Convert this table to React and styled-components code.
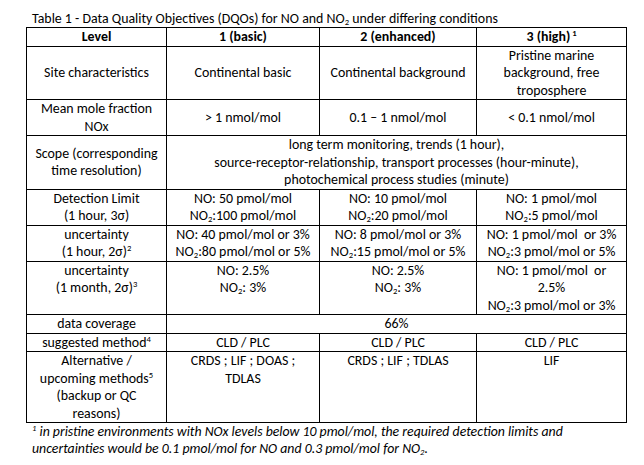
import React from "react";
import styled, { createGlobalStyle } from "styled-components";

const GlobalStyle = createGlobalStyle`
  body {
    margin: 0;
    background: #ffffff;
    font-family: Carlito, Lato, "Liberation Sans", sans-serif;
    color: #000000;
  }
`;

const Page = styled.div`
  width: 644px;
  padding: 10px 0 0 26px;
  box-sizing: border-box;
`;

const Caption = styled.div`
  font-size: 13.9px;
  line-height: 17px;
  margin-left: 6px;
`;

const Table = styled.table`
  width: 600px;
  table-layout: fixed;
  border-collapse: collapse;
  border: 1px solid #000;
  font-size: 13.9px;
  line-height: 17.5px;
`;

const Cell = styled.td`
  border: 1px solid #000;
  padding: 0 3px;
  text-align: center;
  vertical-align: ${(p) => (p.$top ? "top" : "middle")};
  font-weight: ${(p) => (p.$head ? 700 : 400)};
`;

const Sub = styled.sub`
  font-size: 0.62em;
  vertical-align: -0.25em;
  line-height: 0;
`;

const Sup = styled.sup`
  font-size: 0.62em;
  vertical-align: 0.55em;
  line-height: 0;
`;

const Footnote = styled.p`
  margin: 0;
  width: 610px;
  font-size: 13.8px;
  line-height: 17px;
  font-style: italic;
  padding-left: 6px;
`;

const NO2 = () => (
  <>
    NO<Sub>2</Sub>
  </>
);

const rows = [
  {
    label: "Site characteristics",
    cells: ["Continental basic", "Continental background", <>Pristine marine<br />background, free<br />troposphere</>],
  },
  {
    label: <>Mean mole fraction<br />NOx</>,
    cells: ["> 1 nmol/mol", "0.1 – 1 nmol/mol", "< 0.1 nmol/mol"],
  },
  {
    label: <>Scope (corresponding<br />time resolution)</>,
    span: (
      <>
        long term monitoring, trends (1 hour),
        <br />
        source-receptor-relationship, transport processes (hour-minute),
        <br />
        photochemical process studies (minute)
      </>
    ),
  },
  {
    label: <>Detection Limit<br />(1 hour, 3σ)</>,
    cells: [
      <>NO: 50 pmol/mol<br /><NO2 />:100 pmol/mol</>,
      <>NO: 10 pmol/mol<br /><NO2 />:20 pmol/mol</>,
      <>NO: 1 pmol/mol<br /><NO2 />:5 pmol/mol</>,
    ],
  },
  {
    label: <>uncertainty<br />(1 hour, 2σ)<Sup>2</Sup></>,
    cells: [
      <>NO: 40 pmol/mol or 3%<br /><NO2 />:80 pmol/mol or 5%</>,
      <>NO: 8 pmol/mol or 3%<br /><NO2 />:15 pmol/mol or 5%</>,
      <>NO: 1 pmol/mol&nbsp; or 3%<br /><NO2 />:3 pmol/mol or 5%</>,
    ],
  },
  {
    label: <>uncertainty<br />(1 month, 2σ)<Sup>3</Sup></>,
    top: true,
    cells: [
      <>NO: 2.5%<br /><NO2 />: 3%</>,
      <>NO: 2.5%<br /><NO2 />: 3%</>,
      <>NO: 1 pmol/mol&nbsp; or<br />2.5%<br /><NO2 />:3 pmol/mol or 3%</>,
    ],
  },
  { label: "data coverage", span: "66%" },
  {
    label: <>suggested method<Sup>4</Sup></>,
    cells: ["CLD / PLC", "CLD / PLC", "CLD / PLC"],
  },
  {
    label: <>Alternative /<br />upcoming methods<Sup>5</Sup><br />(backup or QC<br />reasons)</>,
    top: true,
    cells: [<>CRDS ; LIF ; DOAS ;<br />TDLAS</>, "CRDS ; LIF ; TDLAS", "LIF"],
  },
];

export default function App() {
  return (
    <Page>
      <GlobalStyle />
      <Caption>
        Table 1 - Data Quality Objectives (DQOs) for NO and <NO2 /> under differing conditions
      </Caption>
      <Table>
        <colgroup>
          <col style={{ width: 140 }} />
          <col style={{ width: 153 }} />
          <col style={{ width: 157 }} />
          <col style={{ width: 150 }} />
        </colgroup>
        <tbody>
          <tr>
            <Cell $head>Level</Cell>
            <Cell $head>1 (basic)</Cell>
            <Cell $head>2 (enhanced)</Cell>
            <Cell $head>
              3 (high)<Sup>&nbsp;1</Sup>
            </Cell>
          </tr>
          {rows.map((r, i) => (
            <tr key={i}>
              <Cell $top={r.top}>{r.label}</Cell>
              {r.span ? (
                <Cell colSpan={3}>{r.span}</Cell>
              ) : (
                r.cells.map((c, j) => (
                  <Cell key={j} $top={r.top}>
                    {c}
                  </Cell>
                ))
              )}
            </tr>
          ))}
        </tbody>
      </Table>
      <Footnote>
        <Sup>1</Sup> in pristine environments with NOx levels below 10 pmol/mol, the required detection limits and
        <br />
        uncertainties would be 0.1 pmol/mol for NO and 0.3 pmol/mol for <NO2 />.
      </Footnote>
    </Page>
  );
}
